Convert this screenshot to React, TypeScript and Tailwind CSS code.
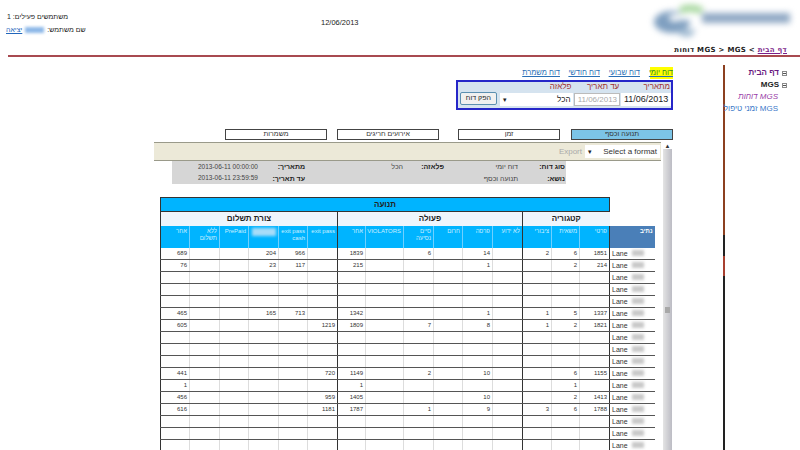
const widths = ['w-[29px]', 'w-[30px]', 'w-[29px]', 'w-[30px]', 'w-[29px]', 'w-[30px]', 'w-[28px]', 'w-[38px]', 'w-[30px]', 'w-[29px]', 'w-[30px]', 'w-[30px]', 'w-[29px]', 'w-[28px]', 'w-[30px]'];

const headers = ['אחר', 'ללא תשלום', 'PrePaid', '', 'exit pass cash', 'exit pass', 'אחר', 'VIOLATORS', 'סיים נסיעה', 'חרום', 'פרסה', 'לא ידוע', 'ציבורי', 'משאית', 'פרטי'];

// sparse rows, keyed by column index from the left
const rows: Record<number, string>[] = [
  { 0: '689', 3: '204', 4: '966', 6: '1839', 8: '6', 10: '14', 12: '2', 13: '6', 14: '1851' },
  { 0: '76', 3: '23', 4: '117', 6: '215', 10: '1', 13: '2', 14: '214' },
  {},
  {},
  {},
  { 0: '465', 3: '165', 4: '713', 6: '1342', 10: '1', 12: '1', 13: '5', 14: '1337' },
  { 0: '605', 5: '1219', 6: '1809', 8: '7', 10: '8', 12: '1', 13: '2', 14: '1821' },
  {},
  {},
  {},
  { 0: '441', 5: '720', 6: '1149', 8: '2', 10: '10', 13: '6', 14: '1155' },
  { 0: '1', 6: '1', 13: '1' },
  { 0: '456', 5: '959', 6: '1405', 10: '10', 13: '2', 14: '1413' },
  { 0: '616', 5: '1181', 6: '1787', 8: '1', 10: '9', 12: '3', 13: '6', 14: '1788' },
  {},
  {},
  {},
];

function Blur({ className }: { className: string }) {
  return <span className={`inline-block blur-[1.5px] ${className}`} />;
}

function Minus() {
  return (
    <span className="flex h-[5px] w-[5px] items-center justify-center border border-[#8a8a8a] bg-white">
      <span className="h-px w-[3px] bg-[#555]" />
    </span>
  );
}

function Tab({ label, className }: { label: string; className: string }) {
  return (
    <div className={`flex h-[11px] w-[102px] items-center justify-center border border-[#444] text-[7px] text-[#333] ${className}`}>
      {label}
    </div>
  );
}

function Logo() {
  return (
    <svg width="146" height="36" viewBox="0 0 146 36" className="blur-[3px]">
      <ellipse cx="22" cy="20" rx="18" ry="11" fill="#7f9fc0" />
      <path d="M30 4 Q44 0 54 6 L50 12 Q40 8 30 12 Z" fill="#a8d8a0" />
      <path d="M18 14 Q34 8 50 16 L50 20 Q34 16 22 20 Z" fill="#ffffff" />
      <path d="M30 26 Q40 30 46 26 L42 34 Q34 36 28 32 Z" fill="#9db8d0" />
      <rect x="52" y="11" width="88" height="10" fill="#8fa8c4" />
    </svg>
  );
}

export default function App() {
  return (
    <div className="h-[450px] w-[800px] overflow-hidden bg-white text-[#222] [font-family:'Liberation_Sans',Arial,sans-serif]">
      {/* top bar */}
      <div className="flex h-[55px] items-start">
        <div className="ml-[6px] mt-[10px] flex w-[78px] flex-col items-start text-[7px] leading-[13px]">
          <div dir="rtl" className="ml-[1px] whitespace-nowrap">משתמשים פעילים: 1</div>
          <div dir="rtl" className="flex items-center gap-[3px] whitespace-nowrap">
            <span>שם משתמש:</span>
            <Blur className="h-[6px] w-[19px] bg-[#8db8e8]" />
            <span className="text-[#2266bb] underline">יציאה</span>
          </div>
        </div>
        <div className="ml-[237px] mt-[16px] w-[39px] whitespace-nowrap text-[7.5px] leading-[13px]">12/06/2013</div>
        <div className="ml-[290px] flex w-[150px] flex-col items-end">
          <div className="mr-[4px] mt-[2px] h-[36px]">
            <Logo />
          </div>
          <div dir="rtl" className="mr-[13px] mt-[7px] whitespace-nowrap text-[7px] font-bold leading-[10px] tracking-[0.3px] [font-family:'DejaVu_Sans',sans-serif]">
            <span className="text-[#7b1f8a] underline">דף הבית</span>
            <span className="text-[#222]"> &gt; MGS &gt; MGS דוחות</span>
          </div>
        </div>
      </div>
      <div className="ml-[8px] h-[2px] bg-[#a84a50]" />

      <div className="flex h-[393px]">
        {/* main column */}
        <div className="w-[723px]">
          <div dir="rtl" className="mr-[50px] mt-[10px] flex h-[12px] items-center text-[7.5px] text-[#2a6fb5] underline">
            <span className="w-[23px] whitespace-nowrap bg-[#ffff00] text-center text-[#2a8a2a]">דוח יומי</span>
            <span className="mr-[10px] w-[30px] whitespace-nowrap text-center">דוח שבועי</span>
            <span className="mr-[10px] w-[31px] whitespace-nowrap text-center">דוח חודשי</span>
            <span className="mr-[9px] w-[37px] whitespace-nowrap text-center">דוח משמרת</span>
          </div>

          {/* filter box */}
          <div className="ml-[456px] mt-[1px] flex h-[30px] w-[217px] items-end border-2 border-[#2626c8] bg-[#d5e3ef] pb-[2px] text-[8px]">
            <div className="mb-[1px] ml-[2px] flex h-[13px] w-[37px] items-center justify-center rounded-[2px] border border-[#5b8fb0] bg-[#f0f0f0] text-[7px]">הפק דוח</div>
            <div className="ml-[3px] w-[74px]">
              <div className="mb-px pr-[2px] text-right text-[8px] leading-[10px] text-[#a03030]">פלאזה</div>
              <div className="flex h-[13px] items-center justify-between bg-white px-[3px]">
                <span className="text-[7px] leading-none">▾</span>
                <span>הכל</span>
              </div>
            </div>
            <div className="ml-px w-[46px]">
              <div className="mb-px pr-[1px] text-right leading-[10px] text-[#a03030]">עד תאריך</div>
              <div className="flex h-[13px] items-center justify-center border border-[#bbb] bg-white text-[8px] text-[#aaa]">11/06/2013</div>
            </div>
            <div className="ml-px w-[50px]">
              <div className="mb-px pr-[1px] text-right leading-[10px] text-[#a03030]">מתאריך</div>
              <div className="flex h-[13px] items-center justify-center bg-white text-[9px]">11/06/2013</div>
            </div>
          </div>

          {/* tabs */}
          <div className="ml-[225px] mt-[19px] flex gap-[10px]">
            <Tab label="משמרות" className="" />
            <Tab label="אירועים חריגים" className="" />
            <Tab label="זמן" className="ml-[9px]" />
            <Tab label="תנועה וכסף" className="ml-px bg-[#7cc4e6]" />
          </div>

          {/* report viewer */}
          <div className="ml-[154px] mt-[2px] flex h-[309px] w-[518px]">
            <div className="w-[507px]">
              <div className="flex h-[19px] items-center justify-end border-y border-[#9a9a8a] bg-[#ece9d8] pr-px text-[8px]">
                <span className="mr-[3px] text-[#aaa]">Export</span>
                <div className="flex h-[13px] w-[75px] items-center justify-between bg-white px-[3px]">
                  <span className="text-[7px] leading-none">▾</span>
                  <span className="text-[#333]">Select a format</span>
                </div>
              </div>

              <div className="ml-[18px] grid h-[23px] w-[394px] grid-cols-[87px_46px_100px_39px_74px_48px] grid-rows-2 items-center bg-[#d6d6d6] text-[7px] leading-none">
                <span className="ml-[26px] whitespace-nowrap text-[6.5px] text-[#444]">2013-06-11 00:00:00</span>
                <b dir="rtl" className="text-right">מתאריך:</b>
                <span className="pr-[2px] text-right text-[#444]">הכל</span>
                <b dir="rtl" className="text-right">פלאזה:</b>
                <span className="text-right text-[#444]">דוח יומי</span>
                <b dir="rtl" className="pr-px text-right">סוג דוח:</b>
                <span className="ml-[26px] whitespace-nowrap text-[6.5px] text-[#444]">2013-06-11 23:59:59</span>
                <b dir="rtl" className="text-right">עד תאריך:</b>
                <span />
                <span />
                <span className="text-right text-[#444]">תנועה וכסף</span>
                <b dir="rtl" className="pr-px text-right">נושא:</b>
              </div>

              {/* data table */}
              <table className="ml-[6px] mt-[13px] table-fixed border-collapse text-[6px] leading-[7px]">
                <colgroup>
                  {widths.map((w, i) => (
                    <col key={i} className={w} />
                  ))}
                  <col className="w-[45px]" />
                </colgroup>
                <tbody>
                  <tr className="h-[14px]">
                    <td colSpan={15} className="border border-[#333] bg-[#00b4ff] text-center text-[8px] font-bold text-[#222]">תנועה</td>
                    <td />
                  </tr>
                  <tr className="h-[14px] text-center text-[8px] font-bold text-[#222]">
                    <td colSpan={6} className="border-x border-[#333] bg-[#eef5fc]">צורת תשלום</td>
                    <td colSpan={6} className="border-r border-[#333] bg-[#eef5fc]">פעולה</td>
                    <td colSpan={3} className="bg-[#eef5fc]">קטגוריה</td>
                    <td />
                  </tr>
                  <tr className="h-[22px]">
                    {headers.map((h, i) => (
                      <td
                        key={i}
                        dir={/[a-zA-Z]/.test(h) && h !== 'exit pass cash' ? 'ltr' : 'rtl'}
                        className={`border-r bg-[#00b4ff] pr-[2px] pt-[2px] align-top text-right text-[#cdefff] ${i === 5 || i === 11 || i === 14 ? 'border-[#333]' : 'border-[#6fd0ff]'} ${i === 0 ? 'border-l border-l-[#333]' : ''}`}
                      >
                        {i === 3 ? <Blur className="h-[8px] w-[24px] bg-[#a8dcf8]" /> : h}
                      </td>
                    ))}
                    <td dir="rtl" className="bg-[#4a7fb8] pr-[2px] pt-[2px] align-top text-right font-bold text-white">נתיב</td>
                  </tr>
                  {rows.map((row, r) => (
                    <tr key={r} className="h-[12px]">
                      {headers.map((_, i) => (
                        <td
                          key={i}
                          className={`border-b border-b-[#555] border-r pr-[2px] text-right text-[#333] ${i === 5 || i === 11 || i === 14 ? 'border-r-[#333]' : 'border-r-[#ddd]'} ${i === 0 ? 'border-l border-l-[#333]' : ''}`}
                        >
                          {row[i] ?? ''}
                        </td>
                      ))}
                      <td className="whitespace-nowrap border-b border-b-[#555] pl-[2px] text-[7px] text-[#333]">
                        Lane <Blur className="ml-[2px] h-[6px] w-[12px] bg-[#c8c8c8]" />
                      </td>
                    </tr>
                  ))}
                </tbody>
              </table>
            </div>

            {/* scrollbar */}
            <div className="ml-[2px] flex w-[9px] flex-col items-center bg-linear-to-r from-[#e4e4e4] to-[#bcbcc4]">
              <div className="flex h-[7px] w-full items-center justify-center bg-white text-[6px] leading-none text-[#333]">▲</div>
              <div className="mt-[158px] h-[6px] w-[5px] bg-[#a8a8a8]" />
            </div>
          </div>
        </div>

        {/* sidebar */}
        <div className="mt-[8px] flex">
          <div className="flex w-[2px] flex-col">
            <div className="h-[170px] bg-[#8c4020]" />
            <div className="h-[21px] bg-[#222]" />
            <div className="h-[20px] bg-[#a84030]" />
            <div className="flex-1 bg-[#222]" />
          </div>
          <div dir="rtl" className="ml-px mt-[2px] w-[74px] pr-[13px] text-[8px] leading-[12px]">
            <div className="flex h-[12px] items-center gap-[3px]">
              <Minus />
              <b className="text-[#6a1a80]">דף הבית</b>
            </div>
            <div className="flex h-[12px] items-center gap-[3px]">
              <Minus />
              <b className="text-[#222]">MGS</b>
            </div>
            <div className="mr-[9px] h-[12px] whitespace-nowrap italic text-[#9a40a8]">MGS דוחות</div>
            <div className="mr-[9px] h-[12px] whitespace-nowrap text-[#3a78c8]">MGS זמני טיפול</div>
          </div>
        </div>
      </div>
    </div>
  );
}
